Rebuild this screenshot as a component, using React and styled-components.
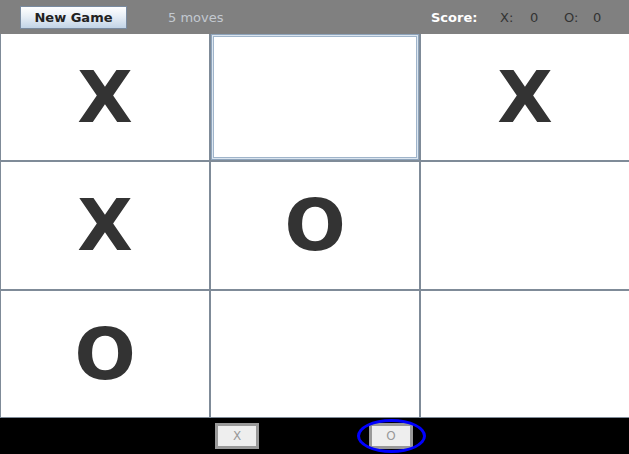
import React from 'react'
import styled, { createGlobalStyle } from 'styled-components'

const GlobalStyle = createGlobalStyle`
  html, body {
    margin: 0;
    padding: 0;
    background: #000;
  }
  body {
    font-family: "DejaVu Sans", "Liberation Sans", sans-serif;
  }
`

const Frame = styled.div`
  width: 629px;
  height: 454px;
  display: flex;
  flex-direction: column;
  overflow: hidden;
`

const TopBar = styled.div`
  height: 34px;
  background: #808080;
  display: flex;
  align-items: center;
  padding-left: 20px;
  box-sizing: border-box;
`

const NewGameButton = styled.button`
  width: 107px;
  height: 23px;
  margin: 0;
  padding: 0;
  border: 1px solid #7a8ba0;
  background: linear-gradient(#ffffff 0%, #e7eef6 45%, #c2d4e7 100%);
  font-family: "DejaVu Sans", sans-serif;
  font-weight: bold;
  font-size: 13px;
  color: #222;
`

const Moves = styled.span`
  margin-left: 41px;
  font-size: 13px;
  color: #c3c9d0;
`

const Score = styled.div`
  margin-left: auto;
  margin-right: 28px;
  display: flex;
  font-size: 13px;
  color: #333;
`

const ScoreLabel = styled.span`
  font-weight: bold;
  color: #fff;
  width: 69px;
`

const ScoreKey = styled.span`
  width: ${p => p.$w}px;
`

const Board = styled.div`
  flex: 1;
  display: grid;
  grid-template-columns: 208px 208px 1fr;
  grid-template-rows: repeat(3, 1fr);
  gap: 2px;
  padding: 0 0 1px 1px;
  background: #7f8b98;
`

const Cell = styled.div`
  background: #fff;
  display: flex;
  align-items: center;
  justify-content: center;
  font-family: "DejaVu Sans", sans-serif;
  font-weight: bold;
  font-size: 72px;
  color: #333;
  box-sizing: border-box;
  ${p => p.$focus && `
    border: 1px solid #8fa5bc;
    box-shadow: inset 0 0 0 1px #dce6f0, inset 0 0 0 2px #9fb4ca;
  `}
`

const BottomBar = styled.div`
  height: 36px;
  background: #000;
  display: flex;
  align-items: center;
  padding-left: 215px;
  box-sizing: border-box;
`

const TurnWrap = styled.div`
  position: relative;
  margin-left: ${p => p.$ml}px;
  display: flex;
`

const TurnButton = styled.div`
  width: 44px;
  height: 26px;
  box-sizing: border-box;
  border: 3px solid #999;
  background: #eee;
  color: #999;
  font-size: 12px;
  display: flex;
  align-items: center;
  justify-content: center;
`

const Ring = styled.div`
  position: absolute;
  left: -12px;
  top: -4px;
  width: 69px;
  height: 34px;
  border: 3px solid #0000ff;
  border-radius: 50%;
  box-sizing: border-box;
`

const cells = ['X', '', 'X', 'X', 'O', '', 'O', '', '']

export default function App() {
  return (
    <Frame>
      <GlobalStyle />
      <TopBar>
        <NewGameButton>New Game</NewGameButton>
        <Moves>5 moves</Moves>
        <Score>
          <ScoreLabel>Score:</ScoreLabel>
          <ScoreKey $w={30}>X:</ScoreKey>
          <ScoreKey $w={34}>0</ScoreKey>
          <ScoreKey $w={29}>O:</ScoreKey>
          <ScoreKey $w={8}>0</ScoreKey>
        </Score>
      </TopBar>
      <Board>
        {cells.map((c, i) => (
          <Cell key={i} $focus={i === 1}>{c}</Cell>
        ))}
      </Board>
      <BottomBar>
        <TurnWrap $ml={0}>
          <TurnButton>X</TurnButton>
        </TurnWrap>
        <TurnWrap $ml={110}>
          <TurnButton>O</TurnButton>
          <Ring />
        </TurnWrap>
      </BottomBar>
    </Frame>
  )
}
